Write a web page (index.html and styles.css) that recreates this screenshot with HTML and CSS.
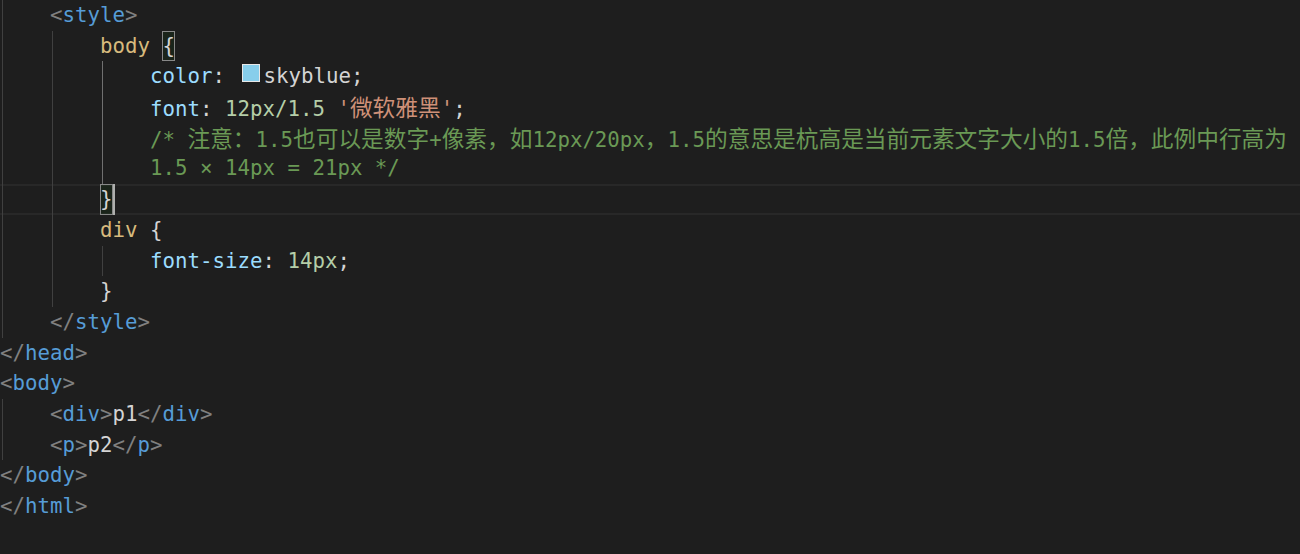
FILE: index.html
```html
<!DOCTYPE html>
<html lang="zh">
<head>
<meta charset="utf-8">
<title>editor</title>
<link rel="stylesheet" href="styles.css">
</head>
<body>
<div class="editor">
  <div class="line"><span class="ind"> </span><span class="pn">&lt;</span><span class="tg">style</span><span class="pn">&gt;</span></div>
  <div class="line"><span class="ind"> </span><span class="ind"> </span><span class="sel">body</span> <span class="bm">{</span></div>
  <div class="line"><span class="ind"> </span><span class="ind"> </span><span class="ind act"> </span><span class="pr">color</span>: <span class="swatch"></span>skyblue;</div>
  <div class="line"><span class="ind"> </span><span class="ind"> </span><span class="ind act"> </span><span class="pr">font</span>: <span class="nu">12px/1.5</span> <span class="st">'<span class="cjk">微软雅黑</span>'</span>;</div>
  <div class="line"><span class="ind"> </span><span class="ind"> </span><span class="ind act"> </span><span class="cm">/* <span class="cjk">注意：</span>1.5<span class="cjk">也可以是数字</span>+<span class="cjk">像素，如</span>12px/20px<span class="cjk">，</span>1.5<span class="cjk">的意思是杭高是当前元素文字大小的</span>1.5<span class="cjk">倍，此例中行高为</span></span></div>
  <div class="line"><span class="ind"> </span><span class="ind"> </span><span class="ind act"> </span><span class="cm">1.5 × 14px = 21px */</span></div>
  <div class="line current"><span class="ind"> </span><span class="ind"> </span><span class="bm">}</span><span class="cursor"></span></div>
  <div class="line"><span class="ind"> </span><span class="ind"> </span><span class="sel">div</span> {</div>
  <div class="line"><span class="ind"> </span><span class="ind"> </span><span class="ind"> </span><span class="pr">font-size</span>: <span class="nu">14px</span>;</div>
  <div class="line"><span class="ind"> </span><span class="ind"> </span>}</div>
  <div class="line"><span class="ind"> </span><span class="pn">&lt;/</span><span class="tg">style</span><span class="pn">&gt;</span></div>
  <div class="line"><span class="pn">&lt;/</span><span class="tg">head</span><span class="pn">&gt;</span></div>
  <div class="line"><span class="pn">&lt;</span><span class="tg">body</span><span class="pn">&gt;</span></div>
  <div class="line"><span class="ind"> </span><span class="pn">&lt;</span><span class="tg">div</span><span class="pn">&gt;</span>p1<span class="pn">&lt;/</span><span class="tg">div</span><span class="pn">&gt;</span></div>
  <div class="line"><span class="ind"> </span><span class="pn">&lt;</span><span class="tg">p</span><span class="pn">&gt;</span>p2<span class="pn">&lt;/</span><span class="tg">p</span><span class="pn">&gt;</span></div>
  <div class="line"><span class="pn">&lt;/</span><span class="tg">body</span><span class="pn">&gt;</span></div>
  <div class="line"><span class="pn">&lt;/</span><span class="tg">html</span><span class="pn">&gt;</span></div>
</div>
</body>
</html>
```
FILE: styles.css
```css
html, body {
  margin: 0;
  padding: 0;
  background: #1e1e1e;
  overflow: hidden;
}

.editor {
  width: 1300px;
  height: 554px;
  background: #1e1e1e;
  color: #d4d4d4;
  font-family: "DejaVu Sans Mono", "Noto Sans CJK SC", monospace;
  font-size: 20.76px;
  line-height: 30.7px;
}

.line {
  height: 30.7px;
  white-space: pre;
}

.line.current {
  box-shadow: inset 0 2px 0 #282828, inset 0 -2px 0 #282828;
}

.ind {
  display: inline-block;
  width: 50px;
  height: 30.7px;
  vertical-align: top;
  background: linear-gradient(#404040, #404040) 2px 0 / 1px 100% no-repeat;
}

.ind.act {
  background: linear-gradient(#707070, #707070) 2px 0 / 1px 100% no-repeat;
}

.cjk {
  font-family: "Noto Sans CJK SC", sans-serif;
  font-size: 22.7px;
}

.pn { color: #808080; }
.tg { color: #569cd6; }
.sel { color: #d7ba7d; }
.pr { color: #9cdcfe; }
.nu { color: #b5cea8; }
.st { color: #ce9178; }
.cm { color: #6a9955; }

.bm {
  display: inline-block;
  width: 12.5px;
  height: 30.7px;
  vertical-align: top;
  box-sizing: border-box;
  outline: 1px solid #888888;
  outline-offset: -1px;
  background: rgba(0, 100, 0, 0.1);
}

.cursor {
  display: inline-block;
  width: 2px;
  height: 30.7px;
  vertical-align: top;
  background: #aeafad;
}

.swatch {
  display: inline-block;
  width: 18px;
  height: 18px;
  box-sizing: border-box;
  margin: 2.6px 3px 0 5px;
  vertical-align: top;
  border: 1px solid #e8e8e8;
  background: #87ceeb;
}
```
